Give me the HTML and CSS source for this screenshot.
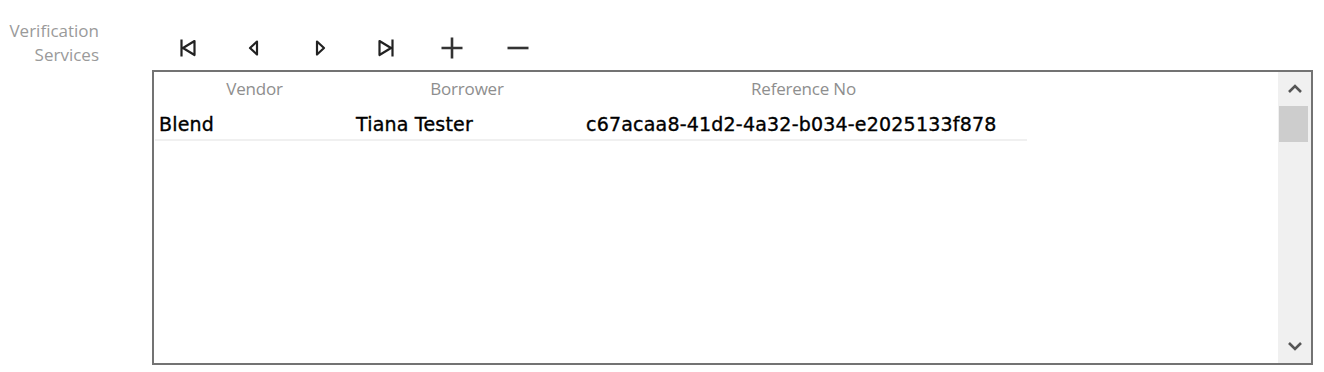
FILE: index.html
```html
<!DOCTYPE html>
<html>
<head>
<meta charset="utf-8">
<link rel="stylesheet" href="styles.css">
</head>
<body>
<div class="page">
  <div class="label">Verification<br>Services</div>
  <div class="main">
    <div class="toolbar">
      <button class="tb" title="First">
        <svg width="18" height="20" viewBox="0 0 18 20"><path d="M2.5 1.5V18.5M15.5 3L4 10L15.5 17Z" fill="none" stroke="#222" stroke-width="2.2" stroke-linejoin="round"/></svg>
      </button>
      <button class="tb" title="Previous">
        <svg width="18" height="20" viewBox="0 0 18 20"><path d="M12 3.5L5 10L12 16.5Z" fill="none" stroke="#222" stroke-width="2.2" stroke-linejoin="round"/></svg>
      </button>
      <button class="tb" title="Next">
        <svg width="18" height="20" viewBox="0 0 18 20"><path d="M6 3.5L13 10L6 16.5Z" fill="none" stroke="#222" stroke-width="2.2" stroke-linejoin="round"/></svg>
      </button>
      <button class="tb" title="Last">
        <svg width="18" height="20" viewBox="0 0 18 20"><path d="M15.5 1.5V18.5M2.5 3L14 10L2.5 17Z" fill="none" stroke="#222" stroke-width="2.2" stroke-linejoin="round"/></svg>
      </button>
      <button class="tb" title="Add">
        <svg width="24" height="24" viewBox="0 0 24 24"><path d="M12 1.5V22.5M1.5 12H22.5" stroke="#333" stroke-width="2.6"/></svg>
      </button>
      <button class="tb" title="Remove">
        <svg width="24" height="24" viewBox="0 0 24 24"><path d="M1.5 12H22.5" stroke="#333" stroke-width="2.6"/></svg>
      </button>
    </div>
    <div class="grid">
      <div class="table">
        <div class="row head">
          <div class="c c1">Vendor</div>
          <div class="c c2">Borrower</div>
          <div class="c c3">Reference No</div>
        </div>
        <div class="row data">
          <div class="c c1">Blend</div>
          <div class="c c2">Tiana Tester</div>
          <div class="c c3">c67acaa8-41d2-4a32-b034-e2025133f878</div>
        </div>
      </div>
      <div class="scroll">
        <div class="arrow">
          <svg width="16" height="12" viewBox="0 0 16 12"><path d="M2 9L8 3L14 9" fill="none" stroke="#555" stroke-width="2.6"/></svg>
        </div>
        <div class="thumb"></div>
        <div class="track"></div>
        <div class="arrow">
          <svg width="16" height="12" viewBox="0 0 16 12"><path d="M2 3L8 9L14 3" fill="none" stroke="#555" stroke-width="2.6"/></svg>
        </div>
      </div>
    </div>
  </div>
</div>
</body>
</html>
```
FILE: styles.css
```css
html, body {
  margin: 0;
  padding: 0;
  background: #fff;
}
body {
  font-family: "Open Sans", "Noto Sans", sans-serif;
}
.page {
  display: flex;
  padding-top: 19px;
  width: 1324px;
  height: 372px;
  box-sizing: border-box;
}
.label {
  width: 99px;
  text-align: right;
  font-size: 17px;
  line-height: 24px;
  color: #9a9a9a;
}
.main {
  margin-left: 53px;
  width: 1161px;
}
.toolbar {
  display: flex;
  height: 38px;
  margin-top: 10px;
  padding-left: 3px;
  margin-bottom: 3px;
}
.tb {
  width: 66px;
  height: 38px;
  border: 0;
  background: transparent;
  padding: 0;
  display: flex;
  align-items: center;
  justify-content: center;
}
.grid {
  display: flex;
  height: 295px;
  border: 2px solid #737373;
  box-sizing: border-box;
  background: #fff;
}
.table {
  flex: 1;
  padding-left: 1px;
}
.row {
  display: flex;
  width: 872px;
}
.head {
  height: 33px;
  align-items: center;
  font-size: 17px;
  color: #8e8e8e;
  letter-spacing: -0.2px;
}
.head .c {
  text-align: center;
}
.data {
  height: 36px;
  padding-top: 4px;
  box-sizing: border-box;
  align-items: center;
  border-bottom: 2px solid #f0f0f0;
  font-family: "DejaVu Sans", sans-serif;
  font-size: 19px;
  letter-spacing: 0.2px;
  color: #000;
  -webkit-text-stroke: 0.35px #000;
}
.c1 { width: 199px; }
.c2 { width: 226px; }
.c3 { width: 447px; }
.data .c1 { padding-left: 4px; width: 195px; }
.data .c2 { padding-left: 2px; width: 224px; }
.data .c3 { padding-left: 6px; width: 441px; }
.scroll {
  width: 33px;
  background: #f0f0f0;
  display: flex;
  flex-direction: column;
  align-items: center;
}
.arrow {
  height: 34px;
  width: 100%;
  display: flex;
  align-items: center;
  justify-content: center;
}
.thumb {
  width: 29px;
  height: 36px;
  background: #cdcdcd;
  margin-left: -2px;
}
.track {
  flex: 1;
}
```
